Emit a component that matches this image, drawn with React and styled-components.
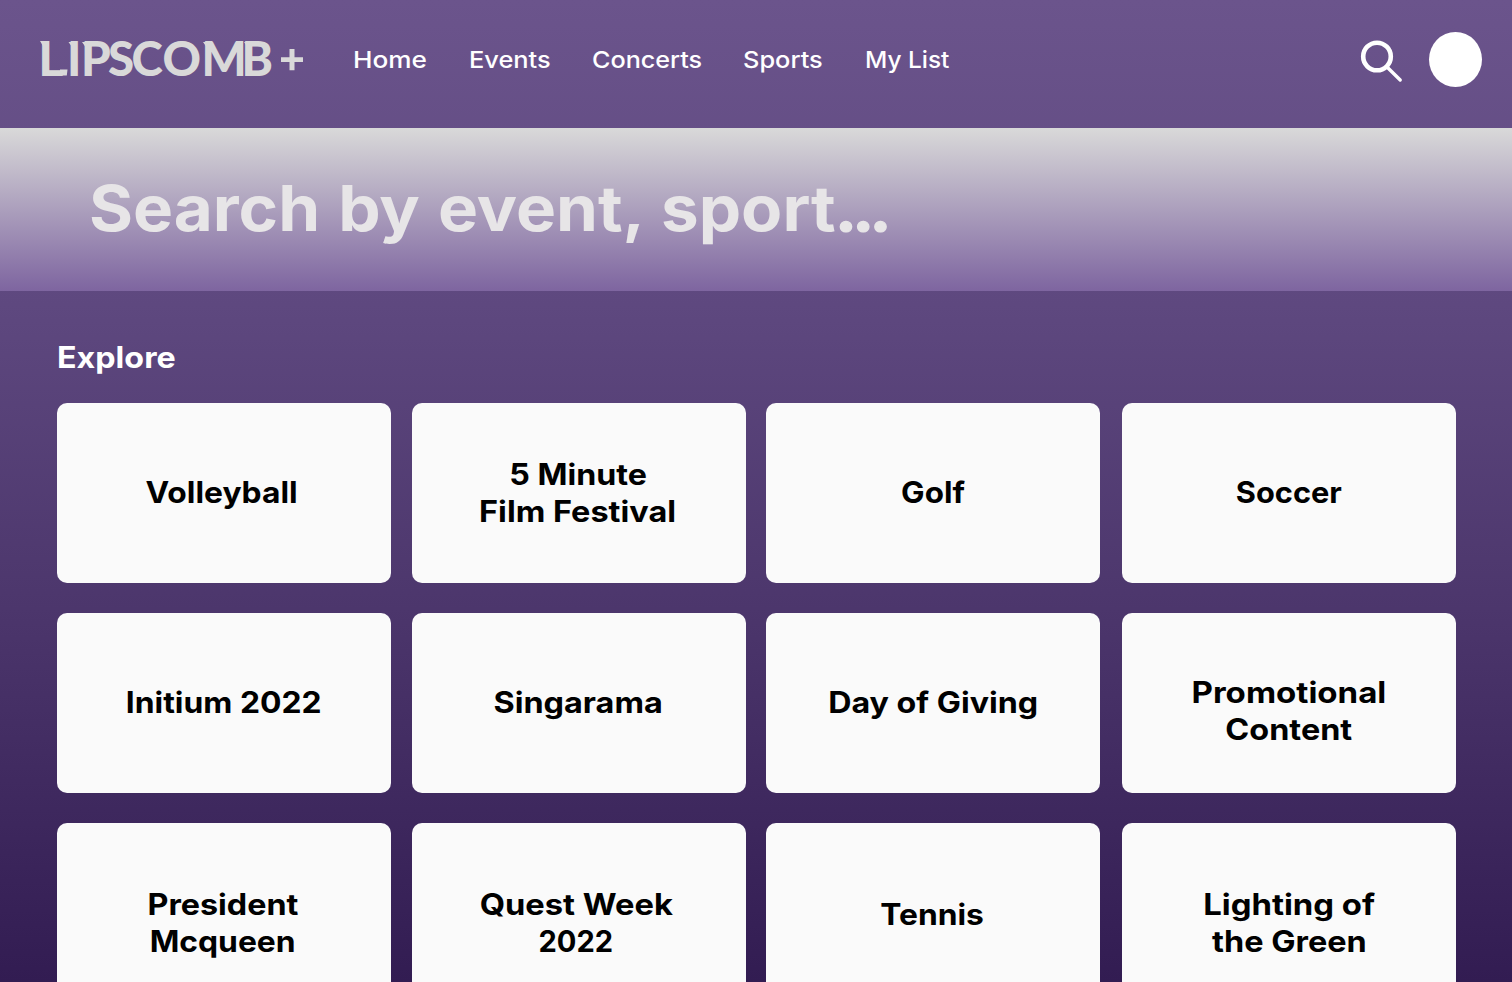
import React from 'react';
import styled, { createGlobalStyle } from 'styled-components';

const GlobalStyle = createGlobalStyle`
  * { box-sizing: border-box; }
  body { margin: 0; font-family: Inter, "Open Sans", sans-serif; }
`;

const Page = styled.div`
  width: 1512px;
  height: 982px;
  overflow: hidden;
  background: linear-gradient(180deg, #6b548c 0%, #5e487f 31%, #4c366c 62%, #321c52 100%);
`;

const Header = styled.header`
  display: flex;
  height: 128px;
  padding: 32px 30px 0 36px;
`;

const Logo = styled.svg`
  display: block;
  width: 272px;
  height: 56px;
  margin-right: 45px;
  overflow: visible;
  font: 900 47.5px Lato, sans-serif;
  fill: #d9d9d9;
`;

const Nav = styled.nav`
  display: flex;
  flex: 1;
  padding-top: 8px;
`;

const NavLink = styled.a`
  width: ${(p) => p.$width}px;
  color: #fff;
  font-size: 23.3px;
  font-weight: 500;
  line-height: 40px;
  white-space: nowrap;
`;

const Wide = styled.span`
  display: inline-block;
  white-space: nowrap;
  transform: scaleX(${(p) => p.$stretch});
  transform-origin: ${(p) => p.$origin || 'left'} center;
`;

const SearchIcon = styled.svg`
  display: block;
  width: 44px;
  height: 44px;
  margin: 7px 25px 0 0;
  fill: none;
  stroke: #fff;
  stroke-linecap: round;
`;

const Avatar = styled.div`
  width: 53px;
  height: 55px;
  border-radius: 50%;
  background: #fff;
`;

const SearchBand = styled.section`
  height: 163px;
  padding: 42px 0 0 89px;
  color: #e7e5e7;
  font-size: 63px;
  font-weight: 700;
  line-height: 76px;
  word-spacing: 2px;
  background: linear-gradient(180deg, #d9d9d9 0%, #7e65a0 100%);
`;

const Dots = styled.span`
  margin-left: -1px;
  letter-spacing: -4.8px;
  -webkit-text-stroke: 1.2px #e7e5e7;
`;

const Explore = styled.main`
  padding: 48px 56px 0 57px;
`;

const Heading = styled.h2`
  margin: 0 0 27px;
  color: #fff;
  font-size: 29.5px;
  font-weight: 700;
  line-height: 37px;
`;

const Grid = styled.div`
  display: grid;
  grid-template-columns: 355px 354px 356px 334px;
  row-gap: 30px;
`;

const Card = styled.article`
  display: flex;
  flex-direction: column;
  align-items: center;
  width: 334px;
  height: 180px;
  padding-top: ${(p) => p.$top}px;
  padding-right: ${(p) => p.$shift || 0}px;
  border-radius: 10px;
  background: #fafafa;
  color: #000;
  font-size: 29.5px;
  font-weight: 700;
  line-height: 37px;
`;

const links = [
  ['Home', 116, 1.123],
  ['Events', 123, 1.09],
  ['Concerts', 151, 1.08],
  ['Sports', 122, 1.089],
  ['My List', 90, 1.048],
];

const cards = [
  { top: 71, shift: 4, lines: [['Volleyball', 1.077]] },
  { top: 53, shift: 2, lines: [['5 Minute', 1.092], ['Film Festival', 1.1]] },
  { top: 71, lines: [['Golf', 1.064]] },
  { top: 71, lines: [['Soccer', 1.043]] },
  { top: 71, shift: 1, lines: [['Initium 2022', 1.08]] },
  { top: 71, shift: 2, lines: [['Singarama', 1.098]] },
  { top: 71, lines: [['Day of Giving', 1.092]] },
  { top: 61, lines: [['Promotional', 1.12], ['Content', 1.098]] },
  { top: 63, shift: 2, lines: [['President', 1.095], ['Mcqueen', 1.078]] },
  { top: 63, shift: 6, lines: [['Quest Week', 1.107], ['2022', 0.986]] },
  { top: 73, shift: 1, lines: [['Tennis', 1.077]] },
  { top: 63, lines: [['Lighting of', 1.114], ['the Green', 1.1]] },
];

export default function App() {
  return (
    <Page>
      <GlobalStyle />
      <Header>
        <Logo viewBox="36 32 272 56" aria-label="Lipscomb plus">
          <text y="75.500" x="38.5 67 81 108 131.5 162.5 201.5 241.5">LIPSCOMB</text>
          <path d="M40 41h9v5h-6zM60 69.500h7.500l-.700 6H60zM68.500 42h6v5h-2.500zM82 42h6v5h-2.500zM203 42h6v5h-2.500zM244 42h6v5h-2.500z" />
          <path d="M289.500 49h5v8.200h8.500v4.800h-8.500v8.300h-5v-8.300H281v-4.800h8.500z" />
        </Logo>
        <Nav>
          {links.map(([label, width, stretch]) => (
            <NavLink key={label} $width={width}>
              <Wide $stretch={stretch}>{label}</Wide>
            </NavLink>
          ))}
        </Nav>
        <SearchIcon viewBox="0 0 44 44">
          <circle cx="17" cy="17.500" r="13.800" strokeWidth="4.600" />
          <path d="M28 29l12.200 12" strokeWidth="3.400" />
        </SearchIcon>
        <Avatar />
      </Header>
      <SearchBand>
        <Wide $stretch={1.068}>Search by event, sport<Dots>...</Dots></Wide>
      </SearchBand>
      <Explore>
        <Heading>
          <Wide $stretch={1.093}>Explore</Wide>
        </Heading>
        <Grid>
          {cards.map((card) => (
            <Card key={card.lines[0][0]} $top={card.top} $shift={card.shift}>
              {card.lines.map(([line, stretch]) => (
                <Wide key={line} $stretch={stretch} $origin="center">{line}</Wide>
              ))}
            </Card>
          ))}
        </Grid>
      </Explore>
    </Page>
  );
}
